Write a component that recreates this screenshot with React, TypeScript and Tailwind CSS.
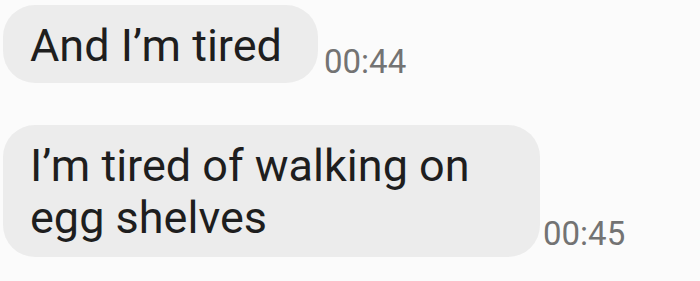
import React from 'react';

interface MessageProps {
  text: string;
  time: string;
  bubbleClass: string;
  timeClass: string;
}

const Message: React.FC<MessageProps> = ({ text, time, bubbleClass, timeClass }) => (
  <div className="flex items-end">
    <div className={`bg-[#ececec] rounded-[32px] pl-[27px] text-[45px] leading-[52px] text-[#1e1e1e] ${bubbleClass}`}>
      {text}
    </div>
    <span className={`text-[33px] leading-none text-[#737373] ${timeClass}`}>{time}</span>
  </div>
);

export default function App() {
  return (
    <div
      className="w-[700px] h-[281px] bg-[#fbfbfb] pl-[3px] pt-[5px] flex flex-col gap-[42px] overflow-hidden"
      style={{ fontFamily: 'Roboto, "Noto Sans", sans-serif' }}
    >
      {/* first bubble */}
      <Message
        text="And I’m tired"
        time="00:44"
        bubbleClass="w-[315px] h-[78px] pt-[15px]"
        timeClass="ml-[6px] mb-[5px]"
      />
      {/* second bubble, wraps onto two lines */}
      <Message
        text="I’m tired of walking on egg shelves"
        time="00:45"
        bubbleClass="w-[537px] h-[132px] pt-[15px] pr-[40px]"
        timeClass="ml-[3px] mb-[7px]"
      />
    </div>
  );
}
